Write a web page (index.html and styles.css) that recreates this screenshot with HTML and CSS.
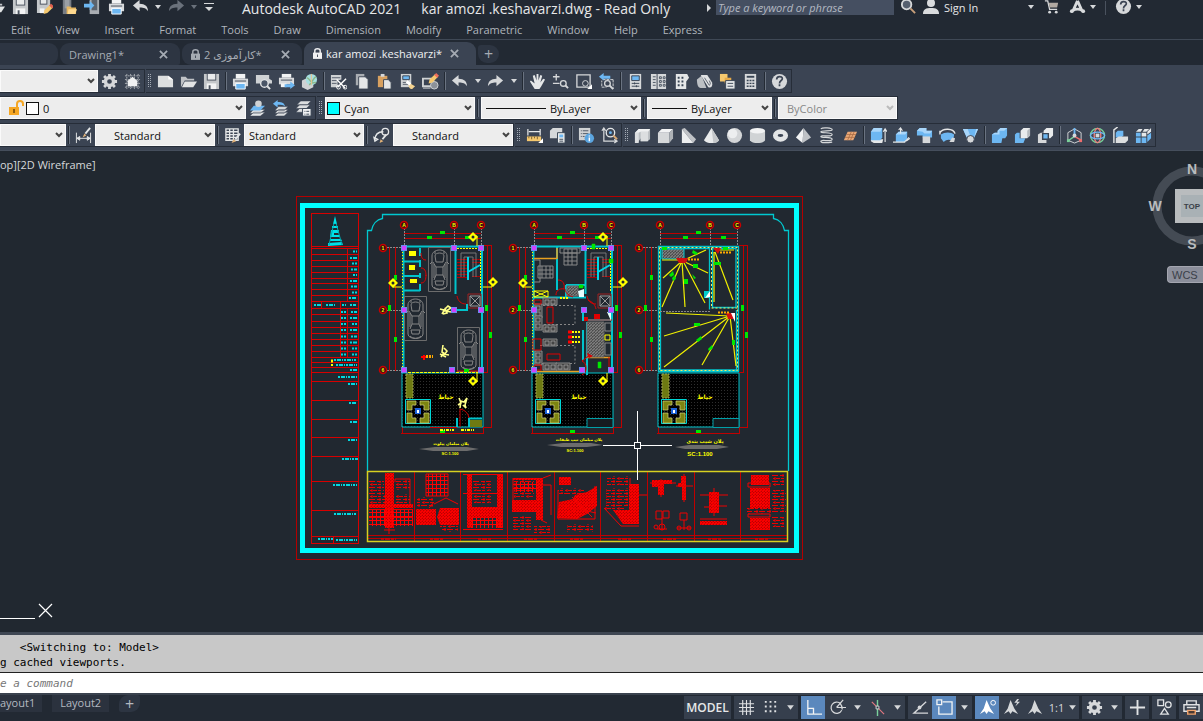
FILE: index.html
```html
<!DOCTYPE html>
<html lang="en">
<head>
    <meta charset="UTF-8">
    <meta name="viewport" content="width=device-width, initial-scale=1.0">
    <title>Autodesk AutoCAD 2021</title>
    <link rel="stylesheet" href="styles.css">
</head>
<body>
    <!-- Icon set -->
    <svg class="sprite" aria-hidden="true">
        <symbol id="save" viewBox="0 0 18 18"><path d="M1 1h16v16H1z" fill="#c4c7ca"/><path d="M4 1h10v7H4z" fill="#4a525e"/><path d="M5 1h8v6H5z" fill="#e8eaeb"/><path d="M4 11h10v6H4z" fill="#f2f3f4"/><path d="M6 13h2v4H6z" fill="#4a525e"/></symbol>
        <symbol id="saveas" viewBox="0 0 18 18"><path d="M1 1h14v9l-6 6H1z" fill="#c4c7ca"/><path d="M4 1h8v6H4z" fill="#4a525e"/><path d="M5 1h6v5H5z" fill="#e8eaeb"/><path d="M4 11h5v5H4z" fill="#f2f3f4"/><path d="M8 17l1-4 6-6 3 3-6 6z" fill="#f5c86e"/><path d="M14 8l2-2 3 3-2 2z" fill="#e0604f"/></symbol>
        <symbol id="openweb" viewBox="0 0 18 18"><path d="M3 0h9v17H3z" fill="#777c84"/><path d="M5 2h5v9H5z" fill="#9a9fa5"/><path d="M7 9h4l1 1h5v7H7z" fill="#e6b762"/><path d="M9 12h9l-2 5H8z" fill="#ffd98f"/></symbol>
        <symbol id="saveweb" viewBox="0 0 18 18"><path d="M6 0h10v17H6z" fill="#a9adb2"/><path d="M8 2h6v11H8z" fill="#5c636d"/><path d="M0 6h6V3l5 5-5 5v-3H0z" fill="#6db7f2"/></symbol>
        <symbol id="print" viewBox="0 0 18 18"><path d="M4 1h10v5H4z" fill="#f2f3f4"/><path d="M1 6h16v8H1z" fill="#d9dbdd"/><path d="M3 8h12v1H3z" fill="#404957"/><path d="M4 11h10v6H4z" fill="#6db7f2" stroke="#fff"/></symbol>
        <symbol id="undo" viewBox="0 0 18 18"><path d="M1 8l7-6v4c6 0 9 3 9 8-2-3-4-4-9-4v4z" fill="#d6d8da"/></symbol>
        <symbol id="redo" viewBox="0 0 18 18"><path d="M17 8l-7-6v4c-6 0-9 3-9 8 2-3 4-4 9-4v4z" fill="currentColor"/></symbol>
        <symbol id="drop" viewBox="0 0 8 8"><path d="M1 2h6L4 6z" fill="currentColor"/></symbol>
        <symbol id="customize" viewBox="0 0 10 10"><path d="M0 1h10v1H0zM1 5h8L5 9z" fill="#d6d8da"/></symbol>
        <symbol id="find" viewBox="0 0 18 18"><circle cx="7" cy="7" r="5" fill="#56606f" stroke="#d6d8da" stroke-width="2"/><path d="M11 11l5 5" stroke="#c9a07b" stroke-width="2"/></symbol>
        <symbol id="user" viewBox="0 0 18 18"><circle cx="9" cy="5" r="4" fill="#d9dbdd"/><path d="M1 16c0-5 3-6 8-6s8 1 8 6z" fill="#d9dbdd"/></symbol>
        <symbol id="cart" viewBox="0 0 18 18"><path d="M2 3h3l2 9h8" fill="none" stroke="#d6d8da" stroke-width="1.4"/><path d="M6 5h10l-1 5H7z" fill="#b1a9a2"/><circle cx="7" cy="15" r="1.5" fill="#d6d8da"/><circle cx="14" cy="15" r="1.5" fill="#d6d8da"/></symbol>
        <symbol id="alogo" viewBox="0 0 18 18"><path d="M9 3L4 14M9 3l5 11M4 13c4-2 6-2 10 0" fill="none" stroke="#d9dbdd" stroke-width="3"/><circle cx="3" cy="14" r="2" fill="#d9dbdd"/><circle cx="15" cy="14" r="2" fill="#d9dbdd"/></symbol>
        <symbol id="help" viewBox="0 0 18 18"><circle cx="9" cy="9" r="8" fill="#d6d8da"/><path d="M6 7c0-4 6-4 6-1 0 2-3 2-3 5M9 12v2" fill="none" stroke="#3b4453" stroke-width="1.8"/></symbol>
        <symbol id="close" viewBox="0 0 10 10"><path d="M1 1l8 8M9 1L1 9" stroke="currentColor" stroke-width="2"/></symbol>
        <symbol id="lock" viewBox="0 0 10 12"><path d="M0 5h10v7H0z" fill="currentColor"/><path d="M2 6V3c0-3 6-3 6 0v3" fill="none" stroke="currentColor" stroke-width="1.6"/><path d="M4.500 7h1v3h-1z" fill="#3b4453"/></symbol>
        <symbol id="gear" viewBox="0 0 18 18"><circle cx="9" cy="9" r="4.300" fill="none" stroke="#d6d8da" stroke-width="3.600"/><path d="M9 1v3M9 14v3M1 9h3M14 9h3M3.300 3.300l2 2M12.700 12.700l2 2M3.300 14.700l2-2M12.700 5.300l2-2" stroke="#d6d8da" stroke-width="3"/></symbol>
        <symbol id="wsgrid" viewBox="0 0 18 18"><path d="M3 1v16M7 1v16M11 1v16M15 1v16M1 3h16M1 7h16M1 11h16M1 15h16" stroke="#aeb3b9" stroke-dasharray="2 1"/><path d="M9 4l6 5h-1v5H4V9H3z" fill="#f0f1f2"/></symbol>
        <symbol id="new" viewBox="0 0 18 18"><path d="M1 3h11l5 4v8H1z" fill="#dcdedf"/><path d="M12 3v4h5z" fill="#fff"/></symbol>
        <symbol id="open" viewBox="0 0 18 18"><path d="M1 15V4h5l2 2h7v2H5z" fill="#bfc2c6"/><path d="M5 9h13l-4 6H2z" fill="#e2e4e5"/></symbol>
        <symbol id="preview" viewBox="0 0 18 18"><path d="M1 2h14v4l3 2v3H1z" fill="#cfd2d4"/><circle cx="10" cy="11" r="4" fill="#4a5566" stroke="#e2e4e5" stroke-width="1.500"/><path d="M13 14l3 3" stroke="#e2e4e5" stroke-width="2"/></symbol>
        <symbol id="publish" viewBox="0 0 18 18"><path d="M4 1h10v4H4z" fill="#f2f3f4"/><path d="M1 5h16v7H1z" fill="#d9dbdd"/><path d="M3 7h12v1H3z" fill="#404957"/><path d="M3 11h6v4H3z" fill="#f2f3f4"/><path d="M7 12h6V9l5 4-5 4v-2H7z" fill="#6db7f2"/></symbol>
        <symbol id="globe" viewBox="0 0 18 18"><path d="M1 8l6-3 6 3v7l-6 3-6-3z" fill="#cfd2d4"/><circle cx="11" cy="7" r="6" fill="#a6dfe0"/><path d="M6 5c3 0 3 4 5 4s2-4 5-5M9 13c0-3 4-3 7-3" fill="none" stroke="#8cb98c" stroke-width="1.500"/><path d="M11 1v12" stroke="#efc08d"/></symbol>
        <symbol id="cut" viewBox="0 0 18 18"><path d="M1 2h11v5l-4 1v7H1z" fill="#cfd2d4"/><path d="M2 5h9M2 8h6M2 11h5" stroke="#555e6a"/><path d="M7 7l9 9M17 6l-9 9" stroke="#fff" stroke-width="1.500"/><circle cx="9" cy="15" r="2" fill="none" stroke="#fff"/><circle cx="16" cy="15" r="2" fill="none" stroke="#fff"/></symbol>
        <symbol id="copy" viewBox="0 0 18 18"><path d="M3 1h9v12H3z" fill="#a9adb2"/><path d="M6 4h7l3 3v10H6z" fill="#e5e7e8" stroke="#3b4453"/></symbol>
        <symbol id="paste" viewBox="0 0 18 18"><path d="M2 3h10v12H2z" fill="#d8a160"/><path d="M5 1h4v3H5z" fill="#d6d8da"/><path d="M8 7h5l3 3v7H8z" fill="#e5e7e8" stroke="#3b4453"/></symbol>
        <symbol id="match" viewBox="0 0 18 18"><path d="M2 1h11v14H2z" fill="#cfd2d4"/><path d="M4 3h7v4H4z" fill="#6db7f2" stroke="#394554"/><path d="M4 10h7M4 12h6" stroke="#555e6a"/><path d="M10 10l7 4-3 3c-3 0-4-2-4-7z" fill="#f3d28f"/><path d="M8 9l4 3" stroke="#fff" stroke-width="3"/></symbol>
        <symbol id="block" viewBox="0 0 18 18"><path d="M1 6h11v8H1z" fill="none" stroke="#cfd2d4" stroke-width="2"/><path d="M1 16h8" stroke="#cfd2d4"/><circle cx="13" cy="13" r="4" fill="#8c9299" stroke="#cfd2d4"/><path d="M7 11l1-4 6-6 3 3-6 6z" fill="#f5c86e"/><path d="M13 2l2-2 3 3-2 2z" fill="#ef6e5c"/></symbol>
        <symbol id="pan" viewBox="0 0 18 18"><path d="M6 17l-5-8 1-1 4 3-2-8 2-1 2 6V1h2v7l2-6 2 1-2 7 3-4 2 1-4 7-2 3z" fill="#e5e7e8"/></symbol>
        <symbol id="zoomrt" viewBox="0 0 18 18"><path d="M1 4h7M4.500 1v7M1 11h7" stroke="#d6d8da" stroke-width="1.400"/><circle cx="12" cy="11" r="3" fill="none" stroke="#d6d8da" stroke-width="1.400"/><path d="M14 13l3 3" stroke="#d6d8da" stroke-width="2"/></symbol>
        <symbol id="zoomwin" viewBox="0 0 18 18"><path d="M2 2h14v13H2z" fill="none" stroke="#d6d8da" stroke-width="1.400"/><circle cx="11" cy="11" r="3" fill="#3b4453" stroke="#d6d8da"/><path d="M13 17h5v-5z" fill="#fff"/></symbol>
        <symbol id="zoomprev" viewBox="0 0 18 18"><path d="M5 7h11M4 14V8M4 15h5M16 7v10" stroke="#d6d8da" stroke-dasharray="3 1"/><path d="M1 4l5-4v3h7v3H6v2z" fill="#6db7f2"/><circle cx="10" cy="11" r="3" fill="#3b4453" stroke="#d6d8da" stroke-width="1.400"/><path d="M12 13l4 4" stroke="#d6d8da" stroke-width="2"/></symbol>
        <symbol id="props" viewBox="0 0 18 18"><path d="M3 1h12v16H3z" fill="#d6d8da"/><path d="M5 3h8v5H5z" fill="#6db7f2" stroke="#394554"/><path d="M5 11h8M5 14h8M8 10v2M10 13v2" stroke="#394554"/></symbol>
        <symbol id="design" viewBox="0 0 18 18"><path d="M1 1h6v16H1zM8 1h9v16H8z" fill="#d6d8da"/><path d="M3 4h3M3 7h3M3 10h3M3 13h3M10 4h2v2h-2zM14 4h2v2h-2zM10 8h2v2h-2zM14 8h2v2h-2zM10 12h2v2h-2zM14 12h2v2h-2z" fill="none" stroke="#4a5462"/></symbol>
        <symbol id="palettes" viewBox="0 0 18 18"><path d="M3 1h12l2 4-3 4v8H3z" fill="#e5e7e8"/><path d="M5 4h2v2H5zM9 4h2v2H9zM5 8h2v2H5zM9 8h2v2H9zM5 12h2v2H5zM9 12h2v2H9z" fill="#394554"/></symbol>
        <symbol id="sheets" viewBox="0 0 18 18"><path d="M1 7l5-4 5 13H5c-3 0-4-4-4-9z" fill="#bcc0c4"/><path d="M5 2h7l5 8c1 4-1 6-4 5z" fill="#dfe1e3"/><path d="M9 5l5 8c2-1 1-3 0-5" fill="none" stroke="#5b636e"/></symbol>
        <symbol id="markup" viewBox="0 0 18 18"><path d="M1 1h8v8H1z" fill="#f5c86e"/><path d="M6 5h7v6H6z" fill="#e6a948"/><path d="M7 8h10v9H7z" fill="#e5e7e8" stroke="#394554"/><path d="M9 11h6M9 14h6" stroke="#394554"/></symbol>
        <symbol id="calc" viewBox="0 0 18 18"><path d="M3 1h12v16H3z" fill="#d6d8da"/><path d="M5 3h8v2H5z" fill="#394554"/><path d="M5 8h8M5 11h8M5 14h8" stroke="#394554" stroke-width="1.500" stroke-dasharray="2 1"/></symbol>
        <symbol id="unlock" viewBox="0 0 18 18"><path d="M2 8h10v8H2z" fill="#f5a623"/><path d="M10 9V5c0-4 6-4 6 0v2" fill="none" stroke="#f5a623" stroke-width="2"/><path d="M6 10h2v4H6z" fill="#8e5c10"/></symbol>
        <symbol id="laycur" viewBox="0 0 18 18"><path d="M5 13h12l-5 4H1zM5 10h12l-5 4H1z" fill="#e5e7e8" stroke="#3b4453" stroke-width=".5"/><path d="M5 6h12l-5 5H1z" fill="#6db7f2"/><circle cx="10" cy="4" r="3.500" fill="#cfd2d4"/></symbol>
        <symbol id="layprev" viewBox="0 0 18 18"><path d="M7 13h10l-4 4H3zM7 10h10l-4 4H3zM7 7h10l-4 4H3z" fill="#dcdedf" stroke="#3b4453" stroke-width=".6"/><path d="M1 4l5-4v2c5 0 7 1 8 5-2-2-4-2-8-2v3z" fill="#6db7f2"/></symbol>
        <symbol id="laystate" viewBox="0 0 18 18"><path d="M5 9h10l-4 4H1zM5 5h11l-4 4H1zM6 1h11l-4 4H2z" fill="#dcdedf" stroke="#3b4453" stroke-width=".6"/><path d="M8 9h9v8H8z" fill="#f2f3f4" stroke="#394554"/><path d="M10 12h5M10 15h5" stroke="#394554" stroke-dasharray="1 1 3"/></symbol>
        <symbol id="dimstyle" viewBox="0 0 18 18"><path d="M1.500 6v11M16.500 6v11M2 12h14M2 12l3-2v4zM16 12l-3-2v4z" stroke="#e5e7e8" fill="#e5e7e8"/><path d="M8 11l2-4 2 2z" fill="#e0b077"/><path d="M11 7l5-6" stroke="#e5e7e8" stroke-width="2"/></symbol>
        <symbol id="tablestyle" viewBox="0 0 18 18"><path d="M2 2h13v12H2zM2 5h13M2 8h13M2 11h13M6 2v12M10 2v12" fill="none" stroke="#e5e7e8" stroke-width="1.400"/><path d="M8 17l2-4 3 2z" fill="#e0b077"/><path d="M12 13l5-6" stroke="#e5e7e8" stroke-width="2"/></symbol>
        <symbol id="mlstyle" viewBox="0 0 18 18"><path d="M2 14c0-7 4-9 9-9M2 15l-1-4 4 2z" fill="none" stroke="#e5e7e8" stroke-width="1.400"/><circle cx="13" cy="5" r="3.500" fill="none" stroke="#e5e7e8" stroke-width="1.400"/><path d="M7 17l1-4 3 2z" fill="#e0b077"/><path d="M10 13l4-5" stroke="#e5e7e8" stroke-width="2"/></symbol>
        <symbol id="measure" viewBox="0 0 18 18"><path d="M2 2v7M15 2v7M3 5h12" stroke="#e5e7e8" stroke-width="1.300"/><path d="M1 10h15v5H1z" fill="#f5c86e"/><path d="M3 10v2M6 10v3M9 10v2M12 10v3" stroke="#7c6230"/><path d="M13 17h5v-5z" fill="#fff"/></symbol>
        <symbol id="massprop" viewBox="0 0 18 18"><path d="M1 4l3-3h10v8l-2 3H1z" fill="#d6d8da"/><path d="M9 6h8v11H9z" fill="#e9ebec" stroke="#394554"/><path d="M11 8h4v3h-4z" fill="#6db7f2"/><path d="M11 13h4M11 15h4" stroke="#394554"/></symbol>
        <symbol id="list" viewBox="0 0 18 18"><path d="M1 1h12v13H1z" fill="#cfd2d4"/><path d="M3 4h8M3 7h8M3 10h4" stroke="#4a5462" stroke-dasharray="1 1 8"/><circle cx="12" cy="12" r="5" fill="#5ba5e0"/><path d="M12 11v4M12 9v1" stroke="#fff" stroke-width="1.500"/></symbol>
        <symbol id="locate" viewBox="0 0 18 18"><path d="M3 1v14h14M1 4l2-3 2 3M14 13l3 2-3 2" fill="none" stroke="#d6d8da" stroke-width="1.300"/><circle cx="10" cy="6" r="4.500" fill="#3b4453" stroke="#e5e7e8" stroke-width="1.400"/><circle cx="10" cy="6" r="1.500" fill="#6db7f2"/><path d="M13 9l4 4" stroke="#d6a773" stroke-width="2"/></symbol>
        <symbol id="polysolid" viewBox="0 0 18 18"><path d="M1 6l4-4h12v11l-3 2H7v-3l-3 5H1z" fill="#b9bdc1"/><path d="M1 6h4v11H1zM7 5h8v10H7z" fill="#dcdee0"/><path d="M1 6l4-4h12l-2 3H7L5 6z" fill="#f0f1f2"/></symbol>
        <symbol id="box" viewBox="0 0 18 18"><path d="M1 6l4-4h12l-4 4z" fill="#f2f3f4"/><path d="M1 6h12v11H1z" fill="#d6d8da"/><path d="M13 6l4-4v10l-4 5z" fill="#aeb2b7"/></symbol>
        <symbol id="wedge" viewBox="0 0 18 18"><path d="M2 2l3-1 12 12-3 4z" fill="#bfc2c6"/><path d="M2 2l12 15H2z" fill="#eceeef"/></symbol>
        <symbol id="cone" viewBox="0 0 18 18"><path d="M9 1l8 13c-3 4-13 4-16 0z" fill="#e9ebec"/><path d="M9 1l8 13c-1 2-4 3-6 3z" fill="#c4c7ca"/></symbol>
        <symbol id="sphere" viewBox="0 0 18 18"><circle cx="9" cy="9" r="8" fill="#d3d5d7"/><circle cx="7" cy="7" r="5" fill="#edeeef"/></symbol>
        <symbol id="cylinder" viewBox="0 0 18 18"><path d="M1 4v10c2 4 14 4 16 0V4z" fill="#d0d3d5"/><ellipse cx="9" cy="4" rx="8" ry="3" fill="#f2f3f4"/></symbol>
        <symbol id="torus" viewBox="0 0 18 18"><ellipse cx="9" cy="9" rx="5.500" ry="4" fill="none" stroke="#e3e5e6" stroke-width="5"/></symbol>
        <symbol id="pyramid" viewBox="0 0 18 18"><path d="M9 1L1 11l7 6z" fill="#f2f3f4"/><path d="M9 1l8 10-9 6z" fill="#bfc2c6"/></symbol>
        <symbol id="helix" viewBox="0 0 18 18"><path d="M3 2c2-2 12-1 12 1s-12 0-12 2 12 0 12 3-12 0-12 2 12 0 12 3-12 0-12 2 6 2 12 1" fill="none" stroke="#d6d8da" stroke-width="1.300"/></symbol>
        <symbol id="planar" viewBox="0 0 18 18"><path d="M7 5h10l-4 9H3z" fill="#e9a877"/><path d="M11 5L7 14M14 5l-4 9M6 8h10M4 11h11" stroke="#a76a42" stroke-width=".8"/></symbol>
        <symbol id="extrude" viewBox="0 0 18 18"><path d="M1 15l3 2h9l1-4H1z" fill="#e5e7e8"/><path d="M1 5l3-4h9v10l-2 3H1z" fill="#6db7f2"/><path d="M1 5l3-4h9l-2 4z" fill="#a9d6fa"/><path d="M16 16V3M14 5l2-3 2 3" fill="none" stroke="#e5e7e8" stroke-width="1.200"/></symbol>
        <symbol id="presspull" viewBox="0 0 18 18"><path d="M3 8l3-3h9v7l-2 4H3z" fill="#6db7f2"/><path d="M3 8l3-3h9l-2 3z" fill="#a9d6fa"/><path d="M8 7V1M6 3l2-2 2 3M0 16h13M12 16l5-5M14 15l4-3" fill="none" stroke="#e5e7e8" stroke-width="1.200"/></symbol>
        <symbol id="sweep" viewBox="0 0 18 18"><path d="M1 4l3-3h7v3h6v7H7V9H1z" fill="#6db7f2"/><path d="M1 4l3-3h7v3h6l-2 3H9L7 5z" fill="#a9d6fa"/><path d="M7 10h8v7H7z" fill="#d6d8da"/></symbol>
        <symbol id="revolve" viewBox="0 0 18 18"><path d="M2 8c4-3 11-3 14 0l-1 7c-4-2-7-2-10 1l-3-4z" fill="#6db7f2"/><path d="M1 6c3-5 14-5 16 1M1 8V4" fill="none" stroke="#e5e7e8" stroke-width="1.500"/><path d="M11 16l3-5 3 1-1 4z" fill="#d6d8da"/></symbol>
        <symbol id="loft" viewBox="0 0 18 18"><path d="M1 2h16l-4 9H5z" fill="#6db7f2"/><path d="M1 2h5l3 8h4l2-8h2l-4 9H5z" fill="#a9d6fa"/><circle cx="9" cy="13" r="4" fill="#d6d8da" stroke="#3b4453"/></symbol>
        <symbol id="union" viewBox="0 0 18 18"><path d="M1 8l3-2h3V4l3-3h7v8l-2 3h-3l-1 5H1z" fill="#6db7f2"/><path d="M1 8l3-2h3V4l3-3h7l-3 3H9v4z" fill="#a9d6fa"/></symbol>
        <symbol id="subtract" viewBox="0 0 18 18"><path d="M1 8l2-2h3v6h6l-2 5H1z" fill="#6db7f2"/><path d="M7 4l3-3h7v8l-3 3H7z" fill="#e9ebec"/><path d="M14 4l3-3v8l-3 3z" fill="#b6babe"/></symbol>
        <symbol id="intersect" viewBox="0 0 18 18"><path d="M1 8l3-2h6v11H1z" fill="#d6d8da"/><path d="M7 4l3-3h7v8l-3 3H7z" fill="#e9ebec"/><path d="M6 7h6v6H6z" fill="#6db7f2" stroke="#394554" stroke-width="1.500"/></symbol>
        <symbol id="gizmomove" viewBox="0 0 18 18"><path d="M9 2l7 4v8l-7 3-7-3V6z" fill="none" stroke="#d6d8da"/><path d="M9 9V1" stroke="#6db7f2" stroke-width="2"/><path d="M9 10l-6 4" stroke="#7ad19a" stroke-width="1.500"/><path d="M9 10l7 4" stroke="#ef6e6e" stroke-width="1.500"/><circle cx="9" cy="9" r="2" fill="#d6d8da"/><path d="M1 13h3v3H1z" fill="#7ad19a"/><path d="M14 13h3v3h-3z" fill="#ef6e6e"/></symbol>
        <symbol id="gizmorot" viewBox="0 0 18 18"><circle cx="9" cy="9" r="7.500" fill="none" stroke="#7ad19a" stroke-width="1.400"/><ellipse cx="9" cy="9" rx="3.500" ry="7.500" fill="none" stroke="#ef7d7d" stroke-width="1.400"/><ellipse cx="9" cy="9" rx="7.500" ry="3.500" fill="none" stroke="#6db7f2" stroke-width="1.400"/><path d="M7 7h4v4H7z" fill="#d6d8da"/></symbol>
        <symbol id="align3d" viewBox="0 0 18 18"><path d="M2 17V3l4-3" fill="none" stroke="#e5e7e8" stroke-width="1.500"/><path d="M4 6l2-2h6v5l-2 2H4z" fill="#6db7f2"/><path d="M4 12l3-2h10v4l-3 3H4z" fill="#dcdedf"/></symbol>
        <symbol id="array3d" viewBox="0 0 18 18"><path d="M1 11h5v6H1zM7 11h5v6H7zM13 9l4-3v6l-4 4zM1 6h5v4H1z" fill="#6db7f2"/><path d="M7 6h5v4H7zM1 5l3-3h4L6 5zM8 5l2-3h5l-3 3zM13 5l4-4v4l-4 3z" fill="#e5e7e8"/></symbol>
        <symbol id="sgrid" viewBox="0 0 18 18"><path d="M5 1v16M9 1v16M13 1v16M1 5h16M1 9h16M1 13h16" stroke="#e0e2e4" stroke-width="1.200"/></symbol>
        <symbol id="ssnap" viewBox="0 0 18 18"><path d="M3 3h12M3 8h12M3 13h12" stroke="#e0e2e4" stroke-width="2" stroke-dasharray="2 3"/></symbol>
        <symbol id="sortho" viewBox="0 0 18 18"><path d="M3 1v15h15M3 10h6v6" fill="none" stroke="#f2f3f4" stroke-width="1.400"/></symbol>
        <symbol id="spolar" viewBox="0 0 18 18"><path d="M12.500 5a6 6 0 1 0 1 7M8 9h10M8 9l7-8M12 5c1 1 2 2 2 6" fill="none" stroke="#d6d8da" stroke-width="1.300"/></symbol>
        <symbol id="siso" viewBox="0 0 18 18"><path d="M9 1v17" stroke="#7bd19c" stroke-width="1.500"/><path d="M3 3l13 13" stroke="#e07880" stroke-width="1.300"/><path d="M7.500 7.500h3v3h-3z" fill="#2c343f" stroke="#d6d8da"/></symbol>
        <symbol id="strack" viewBox="0 0 18 18"><path d="M15 3L2 15h15" fill="none" stroke="#d6d8da" stroke-width="1.400"/><circle cx="8" cy="9" r="2" fill="#d6d8da"/></symbol>
        <symbol id="sosnap" viewBox="0 0 18 18"><path d="M7 3h10v13H3V8" fill="none" stroke="#f2f3f4" stroke-width="1.400"/><path d="M1 1h5v5H1z" fill="none" stroke="#f2f3f4" stroke-width="1.400"/></symbol>
        <symbol id="sanno" viewBox="0 0 18 18"><path d="M8 1l4 9 4 6-6-3-2 3-2-3-5 3 4-6z" fill="currentColor"/></symbol>
        <symbol id="splus" viewBox="0 0 18 18"><path d="M9 1v16M1 9h16" stroke="#e0e2e4" stroke-width="2"/></symbol>
        <symbol id="sshapes" viewBox="0 0 18 18"><path d="M2 1h6v6H2zM5 16h8l-4-6z" fill="none" stroke="#e0e2e4" stroke-width="1.400"/><circle cx="13" cy="6" r="3" fill="none" stroke="#e0e2e4" stroke-width="1.400"/></symbol>
        <symbol id="splot" viewBox="0 0 18 18"><path d="M4 6V2h10v4M1 6h16v7H1zM4 9h10" fill="none" stroke="#e0e2e4" stroke-width="1.500"/><path d="M5 12h8v4H5z" fill="#4b3a33" stroke="#f0a36c" stroke-width="1.500"/></symbol>
    </svg>

    <header class="titlebar">
        <div class="quick-access">
            <button class="qa" aria-label="Open"><svg><use href="#open"/></svg></button>
            <button class="qa" aria-label="Save"><svg><use href="#save"/></svg></button>
            <button class="qa" aria-label="Save As"><svg><use href="#saveas"/></svg></button>
            <button class="qa" aria-label="Open from Web"><svg><use href="#openweb"/></svg></button>
            <button class="qa" aria-label="Save to Web"><svg><use href="#saveweb"/></svg></button>
            <button class="qa" aria-label="Plot"><svg><use href="#print"/></svg></button>
            <button class="qa" aria-label="Undo"><svg><use href="#undo"/></svg></button>
            <button class="qa-drop" aria-label="Undo list"><svg><use href="#drop"/></svg></button>
            <button class="qa dim" aria-label="Redo"><svg><use href="#redo"/></svg></button>
            <button class="qa-drop dim" aria-label="Redo list"><svg><use href="#drop"/></svg></button>
            <button class="qa-custom" aria-label="Customize"><svg><use href="#customize"/></svg></button>
        </div>
        <h1 class="title"><span>Autodesk AutoCAD 2021</span><span>kar amozi .keshavarzi.dwg - Read Only</span></h1>
        <div class="info-center">
            <span class="expander"></span>
            <input class="search" type="text" placeholder="Type a keyword or phrase" aria-label="Search">
            <button class="qa" aria-label="Find"><svg><use href="#find"/></svg></button>
            <button class="sign-in"><svg><use href="#user"/></svg>Sign In</button>
            <button class="qa-drop" aria-label="Account menu"><svg><use href="#drop"/></svg></button>
            <button class="qa cart" aria-label="App Store"><svg><use href="#cart"/></svg></button>
            <button class="qa" aria-label="Autodesk"><svg><use href="#alogo"/></svg></button>
            <button class="qa-drop near" aria-label="Autodesk menu"><svg><use href="#drop"/></svg></button>
            <span class="divider"></span>
            <button class="qa" aria-label="Help"><svg><use href="#help"/></svg></button>
            <button class="qa-drop near" aria-label="Help menu"><svg><use href="#drop"/></svg></button>
        </div>
    </header>

    <nav class="menubar">
        <a href="#">Edit</a>
        <a href="#">View</a>
        <a href="#">Insert</a>
        <a href="#">Format</a>
        <a href="#">Tools</a>
        <a href="#">Draw</a>
        <a href="#">Dimension</a>
        <a href="#">Modify</a>
        <a href="#">Parametric</a>
        <a href="#">Window</a>
        <a href="#">Help</a>
        <a href="#">Express</a>
    </nav>

    <div class="file-tabs">
        <div class="tab tab-start"></div>
        <div class="tab"><a href="#">Drawing1*</a><button aria-label="Close Drawing1"><svg><use href="#close"/></svg></button></div>
        <div class="tab locked"><svg class="lock"><use href="#lock"/></svg><a href="#" lang="fa">کارآموزی 2*</a><button aria-label="Close"><svg><use href="#close"/></svg></button></div>
        <div class="tab locked active"><svg class="lock"><use href="#lock"/></svg><a href="#">kar amozi .keshavarzi*</a><button aria-label="Close kar amozi"><svg><use href="#close"/></svg></button></div>
        <button class="new-tab" aria-label="New tab">+</button>
    </div>

    <div class="toolbars">
        <div class="row">
            <div class="bar">
                <div class="combo w-space"><select aria-label="Workspace"><option></option></select></div>
                <button class="tool" aria-label="Workspace settings"><svg><use href="#gear"/></svg></button>
                <button class="tool" aria-label="My workspace"><svg><use href="#wsgrid"/></svg></button>
            </div>
            <div class="bar">
                <i class="grip"></i>
                <button class="tool" aria-label="New"><svg><use href="#new"/></svg></button>
                <button class="tool" aria-label="Open"><svg><use href="#open"/></svg></button>
                <button class="tool" aria-label="Save"><svg><use href="#save"/></svg></button>
                <i class="sep"></i>
                <button class="tool" aria-label="Plot"><svg><use href="#print"/></svg></button>
                <button class="tool" aria-label="Plot preview"><svg><use href="#preview"/></svg></button>
                <button class="tool" aria-label="Publish"><svg><use href="#publish"/></svg></button>
                <button class="tool" aria-label="3D print"><svg><use href="#globe"/></svg></button>
                <i class="sep"></i>
                <button class="tool" aria-label="Cut"><svg><use href="#cut"/></svg></button>
                <button class="tool" aria-label="Copy"><svg><use href="#copy"/></svg></button>
                <button class="tool" aria-label="Paste"><svg><use href="#paste"/></svg></button>
                <button class="tool" aria-label="Match properties"><svg><use href="#match"/></svg></button>
                <button class="tool" aria-label="Block editor"><svg><use href="#block"/></svg></button>
                <i class="sep"></i>
                <button class="tool" aria-label="Undo"><svg><use href="#undo"/></svg></button>
                <button class="tool-drop" aria-label="Undo list"><svg><use href="#drop"/></svg></button>
                <button class="tool" aria-label="Redo"><svg><use href="#redo"/></svg></button>
                <button class="tool-drop" aria-label="Redo list"><svg><use href="#drop"/></svg></button>
                <i class="sep"></i>
                <button class="tool" aria-label="Pan"><svg><use href="#pan"/></svg></button>
                <button class="tool" aria-label="Zoom realtime"><svg><use href="#zoomrt"/></svg></button>
                <button class="tool" aria-label="Zoom window"><svg><use href="#zoomwin"/></svg></button>
                <button class="tool" aria-label="Zoom previous"><svg><use href="#zoomprev"/></svg></button>
                <i class="sep"></i>
                <button class="tool" aria-label="Properties"><svg><use href="#props"/></svg></button>
                <button class="tool" aria-label="DesignCenter"><svg><use href="#design"/></svg></button>
                <button class="tool" aria-label="Tool palettes"><svg><use href="#palettes"/></svg></button>
                <button class="tool" aria-label="Sheet set manager"><svg><use href="#sheets"/></svg></button>
                <button class="tool" aria-label="Markup set manager"><svg><use href="#markup"/></svg></button>
                <button class="tool" aria-label="QuickCalc"><svg><use href="#calc"/></svg></button>
                <i class="sep"></i>
                <button class="tool" aria-label="Help"><svg><use href="#help"/></svg></button>
            </div>
        </div>

        <div class="row">
            <div class="bar">
                <div class="combo w-layer">
                    <svg class="layer-icon"><use href="#unlock"/></svg>
                    <span class="swatch white"></span>
                    <select aria-label="Layer"><option>0</option></select>
                </div>
                <button class="tool" aria-label="Make current"><svg><use href="#laycur"/></svg></button>
                <button class="tool" aria-label="Layer previous"><svg><use href="#layprev"/></svg></button>
                <button class="tool" aria-label="Layer states"><svg><use href="#laystate"/></svg></button>
            </div>
            <div class="bar">
                <i class="grip"></i>
                <div class="combo w-color"><span class="swatch cyan"></span><select aria-label="Color"><option>Cyan</option></select></div>
                <i class="sep"></i>
                <div class="combo w-ltype"><span class="line long"></span><select aria-label="Linetype"><option>ByLayer</option></select></div>
                <i class="sep"></i>
                <div class="combo w-lweight"><span class="line"></span><select aria-label="Lineweight"><option>ByLayer</option></select></div>
                <i class="sep"></i>
                <div class="combo w-plot disabled"><select aria-label="Plot style" disabled><option>ByColor</option></select></div>
            </div>
        </div>

        <div class="row">
            <div class="bar">
                <div class="combo w-text"><select aria-label="Text style"><option></option></select></div>
                <i class="sep"></i>
                <button class="tool" aria-label="Dimension style"><svg><use href="#dimstyle"/></svg></button>
                <div class="combo w-style indent"><select aria-label="Dimension style list"><option>Standard</option></select></div>
                <i class="sep"></i>
                <button class="tool" aria-label="Table style"><svg><use href="#tablestyle"/></svg></button>
                <div class="combo w-style"><select aria-label="Table style list"><option>Standard</option></select></div>
                <i class="sep"></i>
                <button class="tool" aria-label="Multileader style"><svg><use href="#mlstyle"/></svg></button>
                <div class="combo w-style indent"><select aria-label="Multileader style list"><option>Standard</option></select></div>
            </div>
            <div class="bar">
                <i class="grip"></i>
                <button class="tool" aria-label="Distance"><svg><use href="#measure"/></svg></button>
                <button class="tool" aria-label="Mass properties"><svg><use href="#massprop"/></svg></button>
                <i class="sep"></i>
                <button class="tool" aria-label="List"><svg><use href="#list"/></svg></button>
                <button class="tool" aria-label="Locate point"><svg><use href="#locate"/></svg></button>
            </div>
            <div class="bar">
                <i class="grip"></i>
                <button class="tool" aria-label="Polysolid"><svg><use href="#polysolid"/></svg></button>
                <button class="tool" aria-label="Box"><svg><use href="#box"/></svg></button>
                <button class="tool" aria-label="Wedge"><svg><use href="#wedge"/></svg></button>
                <button class="tool" aria-label="Cone"><svg><use href="#cone"/></svg></button>
                <button class="tool" aria-label="Sphere"><svg><use href="#sphere"/></svg></button>
                <button class="tool" aria-label="Cylinder"><svg><use href="#cylinder"/></svg></button>
                <button class="tool" aria-label="Torus"><svg><use href="#torus"/></svg></button>
                <button class="tool" aria-label="Pyramid"><svg><use href="#pyramid"/></svg></button>
                <button class="tool" aria-label="Helix"><svg><use href="#helix"/></svg></button>
                <button class="tool" aria-label="Planar surface"><svg><use href="#planar"/></svg></button>
                <i class="sep"></i>
                <button class="tool" aria-label="Extrude"><svg><use href="#extrude"/></svg></button>
                <button class="tool" aria-label="Presspull"><svg><use href="#presspull"/></svg></button>
                <button class="tool" aria-label="Sweep"><svg><use href="#sweep"/></svg></button>
                <button class="tool" aria-label="Revolve"><svg><use href="#revolve"/></svg></button>
                <button class="tool" aria-label="Loft"><svg><use href="#loft"/></svg></button>
                <i class="sep"></i>
                <button class="tool" aria-label="Union"><svg><use href="#union"/></svg></button>
                <button class="tool" aria-label="Subtract"><svg><use href="#subtract"/></svg></button>
                <button class="tool" aria-label="Intersect"><svg><use href="#intersect"/></svg></button>
                <i class="sep"></i>
                <button class="tool" aria-label="3D move"><svg><use href="#gizmomove"/></svg></button>
                <button class="tool" aria-label="3D rotate"><svg><use href="#gizmorot"/></svg></button>
                <button class="tool" aria-label="3D align"><svg><use href="#align3d"/></svg></button>
                <button class="tool" aria-label="3D array"><svg><use href="#array3d"/></svg></button>
            </div>
        </div>
    </div>

    <main class="canvas">
        <svg class="model" aria-label="Model space">
            <defs>
                <pattern id="yard" width="3" height="3" patternUnits="userSpaceOnUse"><path d="M0 0h3v3H0z" fill="#000"/><path d="M0 0h1v1H0z" fill="#2e2e2e"/></pattern>
                <pattern id="hatch" width="3" height="3" patternUnits="userSpaceOnUse"><path d="M0 0h3v3H0z" fill="#4a4a4a"/><path d="M0 3L3 0" stroke="#808080" stroke-width="1.300"/></pattern>
                <pattern id="rhatch" width="3" height="3" patternUnits="userSpaceOnUse"><path d="M0 0h3v3H0z" fill="#b00"/><path d="M0 3L3 0" stroke="#f00" stroke-width="1.600"/></pattern>
                <pattern id="rgrid" width="4" height="4" patternUnits="userSpaceOnUse"><path d="M0 .5h4M.5 0v4" stroke="#f00"/></pattern>
                <pattern id="rtext" width="13" height="6" patternUnits="userSpaceOnUse"><path d="M0 1.500h4M5 1.500h6M1 4.500h3M6 4.500h2M9 4.500h4M3 0v3M8 3v3" stroke="#e00"/></pattern>

                <g id="bubble"><circle r="3.500" fill="#301010" stroke="#c80000" stroke-width="1.500"/></g>
                <g id="column"><path d="M-3-3h6v6h-6z" fill="#6c8cf0"/><path d="M-2-2h4v4h-4z" fill="#d040ff"/></g>
                <g id="section" fill="#ff0"><path d="M0-5l5 5-5 5-5-5z"/><circle r="1.500" fill="#212830"/></g>

                <g id="car" fill="none" stroke="#868686">
                    <path d="M.5.500h22v44H.5z" stroke="#6c6c6c"/>
                    <path d="M4 9c0-8 15-8 15 0v29c0 6-15 6-15 0z"/>
                    <path d="M7 9c0-4 9-4 9 0l-1 6H8zM5 15l3 5h7l3-5M6 33l2-5h7l2 5M8 20v8M15 20v8M6 17v14M17 17v14M7 34h9l-1 4H8zM6 40c3 3 8 3 11 0M4 15l-2 2M19 15l2 2M7 4v3M16 4v3"/>
                </g>

                <!-- Axes, dimensions and yard shared by the three plans -->
                <g id="plan-base">
                    <g fill="none" stroke="#c00000" shape-rendering="crispEdges">
                        <path d="M404 233.500h77M404 238.500h77M389.500 247v124M395.500 247v124M487.500 245v128M491.500 245v183M401 433.500h83M402 427v6M483 427v6M483 372.500h5M483 427.500h9M483 245.500h9"/>
                    </g>
                    <path d="M404.500 228v17M454.500 228v17M481.500 228v17M387 247.500h15M387 310.500h15M387 370.500h15" stroke="#8c8c8c" stroke-dasharray="2 1"/>
                    <path d="M402 373h81v54h-81z" fill="url(#yard)" stroke="#00c4cc"/>
                    <path d="M406 374h7v24h-7z" fill="#6e7a12" stroke="#9aa050" stroke-dasharray="2 1"/>
                    <path d="M405.500 399.500h25v24h-25z" fill="none" stroke="#00d8d8"/>
                    <path d="M407 401h9v4h-4v5h-5zM420 401h9v9h-5v-5h-4zM407 413h5v5h4v5h-9zM424 413h5v10h-9v-5h4z" fill="#7d8410" stroke="#d0d080" stroke-width=".7"/>
                    <path d="M415 408h6v6h-6z" fill="#1d62d8"/><path d="M417 410h2v3h-2z" fill="#fff"/>
                    <g fill="#00e800">
                        <path d="M440 231h5v3h-5zM427 236h5v3h-5zM465 236h5v3h-5zM394 275h3v5h-3zM388 305h3v6h-3zM394 337h3v5h-3zM485 305h3v6h-3zM489 332h3v6h-3zM440 430h5v3h-5z"/>
                    </g>
                    <use href="#bubble" x="404" y="225"/><use href="#bubble" x="454" y="225"/><use href="#bubble" x="481" y="225"/>
                    <use href="#bubble" x="383" y="248"/><use href="#bubble" x="383" y="310"/><use href="#bubble" x="383" y="370"/>
                    <g class="axis">
                        <text x="404" y="227">A</text><text x="454" y="227">B</text><text x="481" y="227">C</text>
                        <text x="383" y="250">1</text><text x="383" y="312">2</text><text x="383" y="372">6</text>
                    </g>
                </g>
                <g id="walls" fill="none">
                    <path d="M403.500 246v126M482 246v126M402 246.500h81" stroke="#00c4cc" stroke-width="2"/>
                    <path d="M402.500 246v126" stroke="#ff0" stroke-dasharray="1 2"/>
                </g>
                <g id="stairs" fill="none">
                    <path d="M457 259.500h12M457 262.500h12M457 265.500h12M457 268.500h12M457 271.500h12M457 274.500h12M457 277.500h12M472 259.500h8M472 262.500h8M472 276.500h8" stroke="#b00000"/>
                    <path d="M461 277v-24h15v24M464 277v-20h9v20" stroke="#777"/>
                    <path d="M455.500 247v47" stroke="#00c4cc" stroke-width="2"/>
                    <path d="M468 257v23M468 272l12-7" stroke="#00d8e8" stroke-width="2"/>
                    <path d="M457 248.500h23M480.500 250v42" stroke="#ff0" stroke-dasharray="2 1"/>
                    <path d="M468 294h13v14h-13z" stroke="#a02020"/><path d="M470 296h10v10h-10zM470 296l10 10M480 296l-10 10" stroke="#999"/>
                    <path d="M457 296c1 5 4 8 9 8" stroke="#e00000"/>
                </g>
                <g id="section-marks">
                    <path d="M393 283v4h9M483 287h9v-4M473 236h4v10M473 382h4v-9" fill="none" stroke="#ff0"/>
                    <use href="#section" x="393" y="283"/><use href="#section" x="493" y="282"/><use href="#section" x="473" y="237"/><use href="#section" x="473" y="381"/>
                </g>
                <g id="columns">
                    <use href="#column" x="404" y="248"/><use href="#column" x="454" y="248"/><use href="#column" x="481" y="248"/>
                    <use href="#column" x="404" y="310"/><use href="#column" x="454" y="310"/><use href="#column" x="481" y="310"/>
                    <use href="#column" x="404" y="370"/><use href="#column" x="452" y="370"/><use href="#column" x="481" y="370"/>
                </g>
                <g id="sofa"><path d="M0 0h14v7H0z" fill="#444" stroke="#888"/><path d="M2 2h4v4H2zM8 2h4v4H8z" fill="none" stroke="#aaa" stroke-width=".7"/></g>
            </defs>

            <!-- Sheet coordinates start at the top of the window -->
            <g transform="translate(0 -151)">
                <!-- Sheet frame -->
                <g fill="none" shape-rendering="crispEdges">
                    <path d="M296.500 196.500h506v363h-506z" stroke="#b40000"/>
                    <path d="M302.500 205.500h494v345h-494z" stroke="#0ff" stroke-width="5"/>
                </g>
                <path d="M367.500 471V230.500h4c1-6 5-11 11-12v-4h391v4c6 1 10 6 11 12h4V471" fill="none" stroke="#00c8d0" stroke-width="1.300"/>

                <!-- Title block -->
                <g fill="none" stroke="#d80000" shape-rendering="crispEdges">
                    <path d="M311.500 213.500h47v330h-47zM312 246.500h46M312 248.500h46M312 254.500h46M312 260.500h46M312 266.500h46M312 272.500h46M312 278.500h46M312 283.500h46M312 289.500h46M312 295.500h46M312 301.500h46M312 308.500h46M312 314.500h46M312 321.500h46M312 327.500h46M312 333.500h46M312 339.500h46M312 345.500h46M312 351.500h46M312 357.500h46M312 362.500h46M312 367.500h46M312 372.500h46M312 381.500h46M312 400.500h46M312 419.500h46M312 437.500h46M312 456.500h46M312 481.500h46M312 510.500h46M312 536.500h46"/>
                    <path d="M347.500 249v52M347.500 308v49M340.500 302v55M321.500 302v6M333.500 536v7"/>
                </g>
                <path d="M335 216l2 8h-4zM332 226h6v2h-6zM331 230h8v3h-5v2h6v2h-10zM330 239h11l1 2h-12zM328 243l14-1 1 3-15 1z" fill="#00e0e8"/>
                <path d="M334 223l-5 22M336 223l6 22" stroke="#00a8b0"/>
                <g stroke="#00d8e0" stroke-width="2" stroke-dasharray="2 1 4 1 1 1" fill="none">
                    <path d="M353 251.500h4M350 258h7M352 263.500h5M351 269.500h6M353 275h4M350 281h7M351 286.500h6M352 292.500h5M349 298h8M314 305h7M326 305h10M342 305h4M350 305h6"/>
                    <path d="M341 312h5M341 318h5M341 324h5M341 330h5M341 336.500h5M341 342.500h5M341 348.500h5M341 354.500h5M351 312h6M350 318h7M352 324h5M350 330h7M351 336.500h6M350 342.500h7M352 348.500h5M352 354.500h5"/>
                    <path d="M334 360h23M336 365h21M350 370h7M338 377h19M348 384h9M349 403h8M350 422h7M348 440h9M342 459h16M333 485h24M334 514h23M318 539h15M336 540h21"/>
                </g>
                <path d="M331 359.500h2v3h-2zM331 364h2v2h-2z" fill="#ff0"/>

                <!-- Ground floor -->
                <use href="#plan-base"/>
                <use href="#walls"/>
                <use href="#stairs"/>
                <path d="M404 261.500h16M404 276h16M404 290.500h16M420 248v8M420 260v7M420 273v5M420 284v7M454 310h13v-6" fill="none" stroke="#00c4cc" stroke-width="2"/>
                <path d="M421 253c0 5 2 7 5 7M421 268c5 0 5 6 5 8M421 283c4 0 5-4 5-8M409 252h6M409 266h7M409 281h8" fill="none" stroke="#e00000"/>
                <path d="M409 251h7v5h-7zM409 265h6v5h-6zM410 279h7v4h-7z" fill="#ff0"/>
                <use href="#car" x="428" y="247"/><use href="#car" x="404" y="296"/><use href="#car" x="457" y="327"/>
                <g stroke="#ff8" stroke-width="1.600" fill="none">
                    <path d="M440 309l4 1 4-4 3 2-5 3 5 1M442 314l3-5 2 4-4 1M441 357l2-3 6 1M443 345l-1 7 3 2 2-3-3-3M440 354l6 3M459 398l2 5-3 2M460 408l1-7 3 1 3-4-2 7 1 3-3-3"/>
                </g>
                <path d="M421 357h6M424 355v5" stroke="#f00" stroke-width="2"/><path d="M426 356.500h7" stroke="#fa0" stroke-width="3" stroke-dasharray="2 1"/>
                <path d="M404 372.500h79" stroke="#ff0" stroke-dasharray="3 1"/>
                <path d="M457 371h21M430 427.500h27M460 427v-18c6 1 9 6 9 10" fill="none" stroke="#d00000"/>
                <path d="M457 418v9M469 418v9M469 418.500h13" stroke="#00c4cc" stroke-width="2"/>
                <path d="M470 420h12v7h-12z" fill="#6e7a12"/>
                <path d="M440 430h14M461 430h13" stroke="#ff0" stroke-width="2" stroke-dasharray="3 1 1 1"/>
                <path d="M403 246h4v4h-4zM464 369h5v3h-5z" fill="#00e800"/>
                <use href="#columns"/><use href="#section-marks"/>
                <text class="yard-label" x="446" y="399">حیاط</text>

                <!-- Typical floor -->
                <g transform="translate(130 0)">
                    <use href="#plan-base"/><use href="#walls"/><use href="#stairs"/>
                    <path d="M427 247v43M404 297.500h52M436 285h20M436 285v12M453 310v10h29M457 322v53M453 330v30" fill="none" stroke="#00c4cc" stroke-width="2"/>
                    <path d="M404 258.500h23M427 248v11M404 371.500h50M457 357.500h23" stroke="#e8a020" stroke-width="1.500"/>
                    <path d="M404 291h14v6h-14zM404 291l14 6M418 291l-14 6" fill="none" stroke="#ff0"/>
                    <g fill="none" stroke="#888"><path d="M404 260h6v22h-6M408 266h15v12h-15zM412 266v12M416 266v12M420 266v12M408 270h15M408 274h15M430 248h20v5h-20zM434 249h13v16h-13zM434 253h13M434 257h13M434 261h13M438 249v16M442 249v16"/><path d="M405 305.500h40v19h-40M410 345.500h35v18h-35" stroke-dasharray="2 2"/></g>
                    <path d="M437 286h11v10h-11zM457 322h17v35h-17z" fill="url(#hatch)" stroke="#666"/>
                    <use href="#sofa" x="413" y="298"/><use href="#sofa" x="413" y="325"/><use href="#sofa" x="413" y="339"/><use href="#sofa" x="413" y="363"/><use href="#sofa" x="426" y="363"/>
                    <g transform="rotate(90 404 304)"><use href="#sofa" x="404" y="296"/><use href="#sofa" x="416" y="296"/><use href="#sofa" x="451" y="296"/></g>
                    <path d="M417 307h6v16h-6zM403 339h8v11h-8zM417 354h13v6h-13zM404 300h7v4h-7zM404 365h7v5h-7zM455 320h27M428 280c5 0 7 4 6 9-5-1-8 2-8 6M435 289c1 5 4 7 8 8M458 300c4 2 7 4 8 9M479 357v14M452 375c6-3 5-12 0-14l8-6" fill="none" stroke="#e00000"/>
                    <path d="M438 332h4M438 337h4M438 342h4" stroke="#f00" stroke-width="3"/>
                    <path d="M442 332h8M442 337h8M442 342h8M430 298h8" stroke="#ff0" stroke-width="2" stroke-dasharray="2 1"/>
                    <path d="M464 314h6v5h-6zM454 317h4v4h-4zM457 353l6 3-4 2z" fill="#e00000"/>
                    <path d="M448 291l6-2v8h-5zM477 312h4v9z" fill="#e8ffff"/>
                    <path d="M475 323h6v8h-6zM475 343h6v12h-6z" fill="none" stroke="#888"/>
                    <path d="M475 335h5v5h-5z" fill="none" stroke="#ff0"/>
                    <path d="M453 285l3 4M449 285h4v3h-4zM462 244h3v5h-3zM479 259h4v4h-4zM468 362h3v6h-3z" fill="#00e800" stroke="#00e800" stroke-width=".5"/>
                    <path d="M457 418.500h26v9h-26z" fill="#161b20" stroke="#00a0a8"/>
                    <use href="#columns"/><use href="#section-marks"/>
                    <text class="yard-label" x="449" y="399">حیاط</text>
                </g>

                <!-- Roof -->
                <g transform="translate(256 0)">
                    <use href="#plan-base"/>
                    <g fill="none">
                        <path d="M402.500 246.500h80v125h-80zM404.500 248.500h49v61M456.500 248.500h23.500v59h-23.500zM404 310M480.500 310v60h-76V249" stroke="#00c4cc" stroke-width="1.300"/>
                        <path d="M403.500 247.500h78v123h-78zM455.500 248v60h26" stroke="#f4e860" stroke-dasharray="2 2"/>
                        <path d="M404 311.500h50" stroke="#888" stroke-dasharray="2 1"/>
                    </g>
                    <path d="M406 249h22v10h-22z" fill="url(#hatch)" stroke="#00c4cc"/>
                    <path d="M426 261l24-11M427 261l25 12M427 261l22 42M426 261l3 46M426 261l-20 46M426 261l-19 17M424 260h-18M458 252v50M459 252l18 48M460 250h18M474 316l-64-3M474 316l-66 20M474 316l-66 51M474 316l-28 49M474 316l6 50" stroke="#f0f000" stroke-width="1.200"/>
                    <path d="M420 258h12l-2 5h-7zM457 248h8l-3 6zM470 313h8v6h-6z" fill="#d01010"/>
                    <path d="M432 259.500h11M464 252.500h11M462 312.500h12" stroke="#fa0" stroke-width="2" stroke-dasharray="2 1"/>
                    <path d="M448 291h6v7h-6z" fill="#0cc"/><path d="M454 291v6l-5 1zM475 313h4v9z" fill="#fff"/>
                    <path d="M437 250l5 3-2 2-4-2zM437 264h5v4h-5zM413 275l4-4 1 4-3 2zM416 278l3-3 1 4-3 2zM428 279h4v5h-4zM436 274l4 4-2 1zM406 247h5v3h-5zM467 247h5v3h-5zM458 262h7v3h-7zM438 323h6v3h-6zM440 340l5-4 1 3-4 3zM452 349l4-4 1 3-4 3zM476 340h3v5h-3z" fill="#00e800"/>
                    <path d="M457 418.500h26v9h-26z" fill="#161b20" stroke="#00a0a8"/>
                    <text class="yard-label" x="449" y="399">حیاط</text>
                </g>

                <!-- Plan captions -->
                <g fill="#6c6c6c">
                    <path d="M419 449l16-2h32l12 2-12 2h-34zM547 445l16-2h28l12 2-16 2h-26zM675 447l14-2h30l10 2-12 2h-32z"/>
                </g>
                <g class="caption">
                    <text class="small" x="451" y="445">پلان مبلمان پیلوت</text><text class="scale-note" x="450" y="455">SC:1.100</text>
                    <text class="small" x="579" y="441">پلان مبلمان تیپ طبقات</text><text class="scale-note" x="575" y="452">SC:1.100</text>
                    <text x="705" y="443">پلان شیب بندی</text><text class="scale-note big" x="700" y="456">SC:1.100</text>
                </g>

                <!-- Detail strip -->
                <path d="M368 535.500h420M368 538.500h420M414.500 472v70M460.500 472v70M507.500 472v70M554.500 472v70M600.500 472v70M647.500 472v70M694.500 472v70M740.500 472v70" stroke="#c00000" shape-rendering="crispEdges"/>
                <g fill="url(#rtext)"><path d="M369 481h15v16h-15zM369 494h16v10h-16zM396 480h14v10h-14zM396 494h14v9h-14zM417 497h16v10h-16zM471 481h20v10h-20zM471 493h20v10h-20zM440 524h18v8h-18zM514 480h20v18h-20zM513 516h18v14h-18zM534 526h17v8h-17zM558 488h26v6h-26zM567 524h26v8h-26zM607 476h21v9h-21zM606 488h22v18h-22zM605 506h20v5h-20zM771 474h14v12h-14zM771 490h15v22h-15zM771 517h13v10h-13zM747 508h27v6h-27z"/></g>
                <g fill="url(#rhatch)"><path d="M385 473h9v55h-9zM369 504h44v4h-44zM416 509h20v16h-20zM440 508h19v17h-19l-3-8zM467 474h5v54h-5zM497 474h6v54h-6zM467 507h36v11h-36zM513 478h30v2h-30zM536 478h7v42h-7zM512 500h24v12h-24zM559 477h12v8h-12zM557 518l2-16 14-3 2-4 12-3 10-6v20l-10 8-10 5zM629 484h10v35h-10zM613 510h26v14h-16zM652 480h20v4h-8v11h-6v-8h-6zM681 476h5v24h-4v-13h-4v-4h3zM709 492h10v21h-10zM700 521h27v4h-27zM751 475h18v10h-18zM750 488h20v20h-20zM750 518h20v12h-20z"/></g>
                <g fill="url(#rgrid)"><path d="M369 509h44v17h-44zM426 474h22v22h-22zM470 518h32v10h-32zM513 482h24v10h-24z"/></g>
                <g fill="none" stroke="#f00000">
                    <path d="M395 482v-3h15v25M369 509.500h44M369 517.500h44M384 530h11M389 528v6M426 474h22v22h-22zM434 504l12-6 12 6M434 502l-5 6M463 474.500h40M463 493.500h38M463 529.500h40M513 478v30M541 520l6 3M543 478l8-3M543 485h8v30M558 490v29h37v-33M560 505l36 8M565 515l30-15M572 497l20 20M604 508l17 18h18M639 495h8M630 478v6M650 483h26M661 479v18M676 486h17M684 474v28M656 511h6v8h-6zM663 511h6v7h-6zM662 518v12M657 529h10M677 528h14M680 513h7v7h-7zM684 520v10M700 495h9M719 495h9M704 507h5M719 506h8M714 488v28M700 519h27M748 487h22v-4h-22zM748 514h22v3h-22z"/>
                    <circle cx="662" cy="527" r="3"/><circle cx="656" cy="527" r="2"/><circle cx="679" cy="528" r="2"/><circle cx="689" cy="528" r="2"/>
                </g>
                <g stroke="#e00000" stroke-width="1.500" stroke-dasharray="3 1 5 1"><path d="M381 539h15M430 539h14M478 539h14M524 539h14M570 539h14M618 539h14M663 539h14M708 539h14M755 539h14"/></g>
                <path d="M367.500 471.500h420v70h-420z" fill="none" stroke="#d8d020" stroke-width="1.500"/>

                <!-- Crosshair and UCS icon -->
                <path d="M603 445.500h31M641 445.500h31M637.500 411v31M637.500 449v31M634.500 442.500h6v6h-6z" fill="none" stroke="#fff" shape-rendering="crispEdges"/>
                <path d="M0 618.500h35" stroke="#fff"/><path d="M39 604l13 13M52 604l-13 13" stroke="#fff" stroke-width="1.200"/>
            </g>
        </svg>
        <a class="view-label" href="#">op][2D Wireframe]</a>
        <div class="viewcube">
            <svg viewBox="0 0 55 94">
                <circle cx="44" cy="47" r="35" fill="none" stroke="#444b54" stroke-width="9"/>
                <path d="M27 30h28v34H27z" fill="#b9bcbe"/><path d="M33 36h22v22H33z" fill="#a9b1b5"/>
                <text class="compass" x="44" y="15">N</text><text class="compass" x="7" y="52">W</text><text class="compass" x="44" y="90">S</text>
                <text class="face" x="44" y="50">TOP</text>
            </svg>
            <button class="wcs">WCS</button>
        </div>
    </main>

    <section class="command">
        <pre class="history">   &lt;Switching to: Model&gt;
g cached viewports.</pre>
        <input class="prompt" type="text" placeholder="e a command" aria-label="Command">
    </section>

    <footer class="statusbar">
        <div class="layouts">
            <a href="#">ayout1</a>
            <a href="#">Layout2</a>
            <button aria-label="New layout">+</button>
        </div>
        <div class="status">
            <div class="cell"><button class="model-btn">MODEL</button></div>
            <div class="cell">
                <button aria-label="Grid"><svg><use href="#sgrid"/></svg></button>
                <button aria-label="Snap"><svg><use href="#ssnap"/></svg></button>
                <button class="more" aria-label="Snap settings"><svg><use href="#drop"/></svg></button>
            </div>
            <div class="cell">
                <button class="on" aria-label="Ortho"><svg><use href="#sortho"/></svg></button>
                <button aria-label="Polar"><svg><use href="#spolar"/></svg></button>
                <button class="more" aria-label="Polar settings"><svg><use href="#drop"/></svg></button>
                <button aria-label="Isodraft"><svg><use href="#siso"/></svg></button>
                <button class="more" aria-label="Isodraft settings"><svg><use href="#drop"/></svg></button>
            </div>
            <div class="cell">
                <button aria-label="Object snap tracking"><svg><use href="#strack"/></svg></button>
                <button class="on" aria-label="Object snap"><svg><use href="#sosnap"/></svg></button>
                <button class="more" aria-label="Object snap settings"><svg><use href="#drop"/></svg></button>
            </div>
            <div class="cell">
                <button class="on" aria-label="Annotation visibility"><svg viewBox="0 0 18 18"><use href="#sanno"/><circle cx="15" cy="4" r="2.500" fill="none" stroke="#fff"/></svg></button>
                <button aria-label="Auto scale"><svg viewBox="0 0 18 18"><use href="#sanno"/><path d="M15 0l-3 4h3l-2 4 5-5h-3l2-3z" fill="#d6d8da"/></svg></button>
                <button aria-label="Annotation scale"><svg><use href="#sanno"/></svg></button>
                <button class="scale">1:1<svg><use href="#drop"/></svg></button>
            </div>
            <div class="cell">
                <button aria-label="Workspace switching"><svg><use href="#gear"/></svg></button>
                <button class="more" aria-label="Workspace list"><svg><use href="#drop"/></svg></button>
            </div>
            <div class="cell"><button aria-label="Annotation monitor"><svg><use href="#splus"/></svg></button></div>
            <div class="cell"><button aria-label="Isolate objects"><svg><use href="#sshapes"/></svg></button></div>
            <div class="cell"><button aria-label="Plot"><svg><use href="#splot"/></svg></button></div>
        </div>
    </footer>
</body>
</html>
```
FILE: styles.css
```css
* {
    box-sizing: border-box;
}
body {
    margin: 0;
    height: 100vh;
    display: flex;
    flex-direction: column;
    overflow: hidden;
    background: #222933;
    color: #d6d8da;
    font-family: "Open Sans", "Noto Sans", "DejaVu Sans", sans-serif;
    font-size: 11px;
}
button,
input,
select {
    font: inherit;
    color: inherit;
    border: none;
    background: none;
    padding: 0;
    margin: 0;
}
a {
    color: inherit;
    text-decoration: none;
}
.sprite {
    position: absolute;
    width: 0;
    height: 0;
}

/* Title bar */
.titlebar {
    height: 20px;
    flex: none;
    display: flex;
    align-items: flex-start;
    overflow: hidden;
}
.quick-access,
.info-center {
    display: flex;
    height: 15px;
    align-items: flex-end;
    flex: none;
}
.quick-access {
    margin-left: -16px;
    width: 258px;
}
.qa {
    width: 24px;
    height: 17px;
    display: flex;
    justify-content: center;
    color: #d6d8da;
}
.qa svg {
    width: 17px;
    height: 17px;
}
.qa-drop {
    width: 12px;
    height: 17px;
    display: flex;
    align-items: center;
    justify-content: center;
}
.qa-drop svg {
    width: 8px;
    height: 8px;
}
.quick-access .dim {
    color: #6a717b;
}
.qa-custom {
    margin-left: 4px;
    height: 15px;
}
.qa-custom svg {
    width: 10px;
    height: 10px;
}
.title {
    display: flex;
    gap: 20px;
    margin: 0;
    font-size: 14px;
    font-weight: normal;
    line-height: 17px;
    white-space: nowrap;
    color: #e6e7e8;
}
.info-center {
    margin-left: auto;
    padding-right: 60px;
}
.expander {
    align-self: center;
    margin-right: 5px;
    border: 4px solid transparent;
    border-left: 4px solid #d6d8da;
    border-right: 0;
}
.search {
    width: 178px;
    height: 16px;
    margin-right: 2px;
    background: #454f61;
    padding: 0 2px;
    font-style: italic;
    align-self: flex-end;
}
.search::placeholder {
    color: #b4b9c2;
}
.sign-in {
    display: flex;
    align-items: center;
    gap: 4px;
    height: 16px;
    width: 105px;
    padding-left: 2px;
    color: #e6e7e8;
}
.sign-in svg {
    width: 18px;
    height: 18px;
}
.cart {
    margin: 0 2px;
}
.near {
    width: 8px;
}
.divider {
    width: 1px;
    height: 14px;
    margin: 0 5px 0 8px;
    background: #4a525e;
}

/* Menu bar */
.menubar {
    display: flex;
    gap: 25px;
    height: 20px;
    flex: none;
    padding-left: 11px;
    line-height: 19px;
    color: #b0b5bc;
    border-bottom: 1px solid #3f4855;
}

/* File tabs */
.file-tabs {
    display: flex;
    align-items: flex-end;
    gap: 2px;
    height: 25px;
    flex: none;
}
.tab {
    display: flex;
    align-items: center;
    width: 120px;
    height: 22px;
    padding: 0 12px 0 9px;
    border-radius: 9px 9px 2px 9px;
    background: #2d3542;
    color: #a5abb3;
}
.tab-start {
    width: 58px;
    border-radius: 0 9px 9px 0;
}
.tab button {
    display: flex;
    margin-left: auto;
    color: #a5abb3;
}
.tab button svg {
    width: 9px;
    height: 9px;
}
.tab .lock {
    width: 9px;
    height: 11px;
    margin-right: 4px;
}
.tab.active {
    width: 172px;
    height: 23px;
    padding-right: 17px;
    border-radius: 9px 9px 0 0;
    background: #3b4453;
    color: #f0f1f2;
}
.new-tab {
    width: 21px;
    height: 18px;
    margin-bottom: 2px;
    border-radius: 3px 9px 9px 9px;
    background: #2d3542;
    font-size: 16px;
    line-height: 16px;
    color: #a5abb3;
}

/* Toolbars */
.toolbars {
    flex: none;
    display: flex;
    flex-direction: column;
    gap: 3px;
    padding: 4px 0 3px;
    background: #3b4453;
    border-bottom: 1px solid #454e5c;
}
.row {
    display: flex;
    gap: 1px;
}
.bar {
    display: flex;
    align-items: center;
    height: 24px;
    border: 1px solid #262d38;
    border-left-width: 0;
}
.tool {
    width: 23px;
    height: 22px;
    display: flex;
    align-items: center;
    justify-content: center;
    color: #d6d8da;
}
.tool svg {
    width: 17px;
    height: 17px;
}
.tool-drop {
    width: 13px;
    display: flex;
    justify-content: center;
}
.tool-drop svg {
    width: 8px;
    height: 8px;
}
.sep {
    width: 2px;
    height: 18px;
    margin: 0 2px;
    background: #232a34;
    border-right: 1px solid #6a7381;
}
.grip {
    width: 4px;
    height: 14px;
    margin: 0 2px;
    background-image:
        linear-gradient(90deg, transparent 50%, #3b4453 50%),
        linear-gradient(#a4abb5 50%, #3b4453 50%);
    background-size: 2px 2px;
}
.combo {
    display: flex;
    align-items: center;
    height: 22px;
    background: #ededed;
    color: #111;
    border: 1px solid #fafafa;
}
.combo select {
    flex: 1;
    min-width: 0;
    height: 20px;
    padding: 0 16px 0 4px;
    appearance: none;
    border-radius: 0;
    background: url("data:image/svg+xml,%3Csvg xmlns='http://www.w3.org/2000/svg' width='8' height='6'%3E%3Cpath d='M1 1l3 3 3-3' fill='none' stroke='%23444' stroke-width='2'/%3E%3C/svg%3E") no-repeat right 2px center;
}
.combo.disabled select {
    color: #888;
    opacity: 1;
    padding-left: 8px;
    background-image: url("data:image/svg+xml,%3Csvg xmlns='http://www.w3.org/2000/svg' width='8' height='6'%3E%3Cpath d='M1 1l3 3 3-3' fill='none' stroke='%23bbb' stroke-width='2'/%3E%3C/svg%3E");
}
.combo.indent select {
    padding-left: 18px;
}
.w-space { width: 98px; }
.w-layer { width: 246px; }
.w-color { width: 150px; }
.w-ltype { width: 160px; }
.w-lweight { width: 125px; }
.w-plot { width: 119px; }
.w-text { width: 66px; }
.w-style { width: 120px; }
.layer-icon {
    width: 18px;
    height: 18px;
    margin: 0 1px 0 6px;
}
.swatch {
    width: 13px;
    height: 13px;
    border: 1px solid #111;
}
.swatch.white { background: #fff; }
.swatch.cyan {
    background: #0ff;
    margin-left: 1px;
}
.line {
    width: 35px;
    height: 1px;
    margin-left: 4px;
    background: #111;
}
.line.long {
    width: 60px;
}

/* Drawing area */
.canvas {
    position: relative;
    flex: 1;
    min-height: 0;
    overflow: hidden;
    background: #212830;
}
.model {
    display: block;
    width: 100%;
    height: 100%;
}
.axis text {
    font: bold 5px "Liberation Sans", sans-serif;
    fill: #ff0;
    text-anchor: middle;
}
.yard-label,
.caption text {
    font: bold 5px "DejaVu Sans", sans-serif;
    fill: #ff0;
    text-anchor: middle;
}
.yard-label {
    font-size: 6px;
}
.caption .small {
    font-size: 4px;
}
.caption .scale-note {
    font: bold 4px "Liberation Sans", sans-serif;
}
.caption .big {
    font-size: 6px;
}
.view-label {
    position: absolute;
    top: 6px;
    left: 0;
}
.viewcube {
    position: absolute;
    top: 8px;
    right: 0;
    width: 55px;
}
.viewcube svg {
    display: block;
    width: 55px;
    height: 94px;
}
.compass {
    font: bold 14px "Liberation Sans", sans-serif;
    fill: #b9bcbe;
    text-anchor: middle;
}
.face {
    font: bold 8px "Liberation Sans", sans-serif;
    fill: #3a4048;
    text-anchor: middle;
}
.wcs {
    display: block;
    width: 36px;
    height: 17px;
    margin: 13px 0 0 auto;
    padding-left: 4px;
    text-align: left;
    font-family: "Liberation Sans", sans-serif;
    background: #8b8e9a;
    border: 1px solid #a4a6b0;
    border-right: 0;
    border-radius: 4px 0 0 4px;
    color: #3a3f49;
}

/* Command line */
.command {
    flex: none;
    border-top: 3px solid #3f4753;
    font-family: "DejaVu Sans Mono", monospace;
}
.history {
    margin: 0;
    padding: 5px 0 2px;
    background: #c8c8c8;
    color: #000;
    font-family: inherit;
    font-size: 11px;
    line-height: 15px;
    border-bottom: 1px solid #222;
}
.prompt {
    display: block;
    width: 100%;
    height: 20px;
    background: #fff;
    color: #222;
    font-style: italic;
}
.prompt::placeholder {
    color: #777;
}

/* Status bar */
.statusbar {
    flex: none;
    display: flex;
    justify-content: space-between;
    height: 28px;
    border-top: 2px solid #3a424e;
}
.layouts {
    display: flex;
    height: 17px;
    gap: 10px;
    line-height: 16px;
    color: #b4b9c0;
}
.layouts a {
    padding: 0 7px 0 0;
    background: #2b323e;
}
.layouts a + a {
    padding: 0 8px;
}
.layouts button {
    width: 21px;
    border-radius: 9px 2px 9px 2px;
    background: #2d3542;
    font-size: 16px;
    line-height: 14px;
}
.status {
    display: flex;
    gap: 3px;
    padding-top: 1px;
}
.cell {
    display: flex;
    height: 23px;
    background: #363f4d;
}
.cell button {
    width: 24px;
    display: flex;
    align-items: center;
    justify-content: center;
    color: #d6d8da;
}
.cell svg {
    width: 17px;
    height: 17px;
    overflow: visible;
}
.cell .on {
    background: #5b88bd;
    color: #fff;
}
.cell .more {
    width: 16px;
}
.cell .more svg,
.cell .scale svg {
    width: 9px;
    height: 9px;
}
.cell .scale {
    width: 32px;
    gap: 4px;
}
.cell .model-btn {
    width: 47px;
    font-size: 12px;
    font-weight: 600;
    color: #e6e7e8;
}
```
